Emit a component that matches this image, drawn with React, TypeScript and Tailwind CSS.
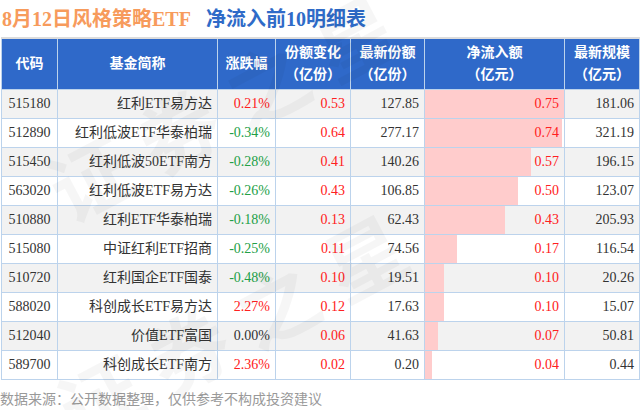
const rows = [
  { code: "515180", name: "红利ETF易方达", pct: "0.21%", chg: "0.53", shares: "127.85", flow: 0.75, size: "181.06" },
  { code: "512890", name: "红利低波ETF华泰柏瑞", pct: "-0.34%", chg: "0.64", shares: "277.17", flow: 0.74, size: "321.19" },
  { code: "515450", name: "红利低波50ETF南方", pct: "-0.28%", chg: "0.41", shares: "140.26", flow: 0.57, size: "196.15" },
  { code: "563020", name: "红利低波ETF易方达", pct: "-0.26%", chg: "0.43", shares: "106.85", flow: 0.5, size: "123.07" },
  { code: "510880", name: "红利ETF华泰柏瑞", pct: "-0.18%", chg: "0.13", shares: "62.43", flow: 0.43, size: "205.93" },
  { code: "515080", name: "中证红利ETF招商", pct: "-0.25%", chg: "0.11", shares: "74.56", flow: 0.17, size: "116.54" },
  { code: "510720", name: "红利国企ETF国泰", pct: "-0.48%", chg: "0.10", shares: "19.51", flow: 0.1, size: "20.26" },
  { code: "588020", name: "科创成长ETF易方达", pct: "2.27%", chg: "0.12", shares: "17.63", flow: 0.1, size: "15.07" },
  { code: "512040", name: "价值ETF富国", pct: "0.00%", chg: "0.06", shares: "41.63", flow: 0.07, size: "50.81" },
  { code: "589700", name: "科创成长ETF南方", pct: "2.36%", chg: "0.02", shares: "0.20", flow: 0.04, size: "0.44" },
];

const maxFlow = 0.75;

function pctColor(pct: string) {
  if (pct.startsWith("-")) return "text-[#22a046]";
  if (pct === "0.00%") return "text-[#333]";
  return "text-[#ff2020]";
}

function Head({ top, bottom }: { top: string; bottom?: string }) {
  return (
    <th className="border-x border-[#bcd3ec] bg-[#2f69c9] px-1 text-center align-middle font-bold text-white">
      <div className="leading-[22px]">{top}</div>
      {bottom && <div className="leading-[22px]">{bottom}</div>}
    </th>
  );
}

export default function App() {
  return (
    <div
      className="relative h-[410px] w-[640px] overflow-hidden bg-white"
      style={{ fontFamily: '"Liberation Serif", "Noto Sans CJK SC", serif' }}
    >
      <div className="flex h-[37px] items-center gap-[15px] pl-[2px] text-[20px] font-bold">
        <span className="text-[#f79b5c]">8月12日风格策略ETF</span>
        <span className="text-[#2f6bc8]">净流入前10明细表</span>
      </div>

      <table className="ml-[1px] w-[638px] table-fixed border-collapse border-t-2 border-t-[#dcdcdc] text-[14px] text-[#333]">
        <colgroup>
          <col className="w-[56px]" />
          <col className="w-[160px]" />
          <col className="w-[58px]" />
          <col className="w-[75px]" />
          <col className="w-[74px]" />
          <col className="w-[140px]" />
          <col className="w-[75px]" />
        </colgroup>
        <thead>
          <tr className="h-[51px]">
            <Head top="代码" />
            <Head top="基金简称" />
            <Head top="涨跌幅" />
            <Head top="份额变化" bottom="（亿份）" />
            <Head top="最新份额" bottom="（亿份）" />
            <Head top="净流入额" bottom="（亿元）" />
            <Head top="最新规模" bottom="（亿元）" />
          </tr>
        </thead>
        <tbody>
          {rows.map((r, i) => (
            <tr key={r.code} className={`h-[29px] ${i % 2 === 0 ? "bg-[#f2f2f2]" : "bg-white"}`}>
              <td className="border border-[#bcd3ec] text-center">{r.code}</td>
              <td className="border border-[#bcd3ec] pr-[5px] text-right">{r.name}</td>
              <td className={`border border-[#bcd3ec] pr-[5px] text-right ${pctColor(r.pct)}`}>{r.pct}</td>
              <td className="border border-[#bcd3ec] pr-[5px] text-right text-[#ff2020]">{r.chg}</td>
              <td className="border border-[#bcd3ec] pr-[5px] text-right">{r.shares}</td>
              <td className="relative border border-[#bcd3ec] p-0 text-right text-[#ff2020]">
                <div
                  className="absolute inset-y-0 left-0 bg-[#ffcccc]"
                  style={{ width: `${(r.flow / maxFlow) * 100}%` }}
                />
                <span className="relative pr-[5px]">{r.flow.toFixed(2)}</span>
              </td>
              <td className="border border-[#bcd3ec] pr-[5px] text-right">{r.size}</td>
            </tr>
          ))}
        </tbody>
      </table>

      <div
        className="pt-[9px] text-[14px] leading-[18px] text-[#999]"
        style={{ fontFamily: '"Noto Sans CJK SC", sans-serif' }}
      >
        数据来源：公开数据整理，仅供参考不构成投资建议
      </div>

      {/* faint watermark */}
      <div
        className="pointer-events-none absolute left-[30px] top-[40px] -rotate-[28deg] text-[80px] font-bold tracking-[20px] text-black/[0.035]"
        style={{ fontFamily: '"Noto Sans CJK SC", sans-serif' }}
      >
        证券之星
      </div>
      <div
        className="pointer-events-none absolute left-[40px] top-[260px] -rotate-[28deg] text-[80px] font-bold tracking-[20px] text-black/[0.035]"
        style={{ fontFamily: '"Noto Sans CJK SC", sans-serif' }}
      >
        证券之星
      </div>
    </div>
  );
}
